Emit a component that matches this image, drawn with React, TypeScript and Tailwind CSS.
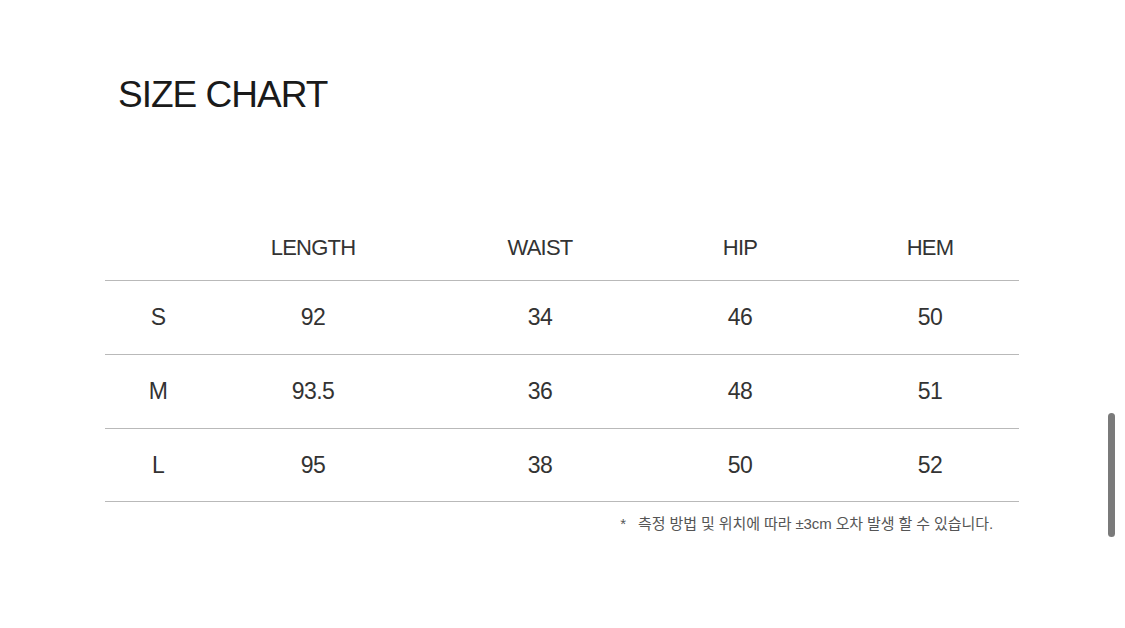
const rows = [
  { size: "S", length: "92", waist: "34", hip: "46", hem: "50" },
  { size: "M", length: "93.5", waist: "36", hip: "48", hem: "51" },
  { size: "L", length: "95", waist: "38", hip: "50", hem: "52" },
];

const cols = "grid grid-cols-[106px_204px_250px_150px_204px]";

export default function App() {
  return (
    <div
      className="relative h-[628px] w-[1125px] overflow-hidden bg-white text-[#222]"
      style={{ fontFamily: '"Liberation Sans", "Noto Sans CJK KR", sans-serif' }}
    >
      <div className="ml-[105px] w-[914px] pt-[76px]">
        <h1 className="ml-[13px] text-[37px] leading-[37px] tracking-[-1px] text-[#1a1a1a]">
          SIZE CHART
        </h1>

        <div className="mt-[102px]">
          <div className={`${cols} h-[66px] items-center border-b border-[#b9b9b9] text-[22px] tracking-[-0.8px] text-[#333]`}>
            <div />
            <div className="text-center">LENGTH</div>
            <div className="text-center">WAIST</div>
            <div className="text-center">HIP</div>
            <div className="pl-[26px] text-center">HEM</div>
          </div>

          {rows.map((r, i) => (
            <div
              key={r.size}
              className={`${cols} ${i === 2 ? "h-[73px]" : "h-[74px]"} items-center border-b border-[#b9b9b9] text-[23px] tracking-[-0.6px] text-[#333]`}
            >
              <div className="text-center">{r.size}</div>
              <div className="text-center">{r.length}</div>
              <div className="text-center">{r.waist}</div>
              <div className="text-center">{r.hip}</div>
              <div className="pl-[26px] text-center">{r.hem}</div>
            </div>
          ))}

          <p className="mt-[11px] pr-[26px] text-right text-[15px] tracking-[-0.1px] text-[#555]">
            <span className="mr-[12px]">*</span>측정 방법 및 위치에 따라 ±3cm 오차 발생 할 수 있습니다.
          </p>
        </div>
      </div>

      <div className="absolute left-[1108px] top-[413px] h-[124px] w-[7px] rounded-full bg-[#7a7a7a]" />
    </div>
  );
}
